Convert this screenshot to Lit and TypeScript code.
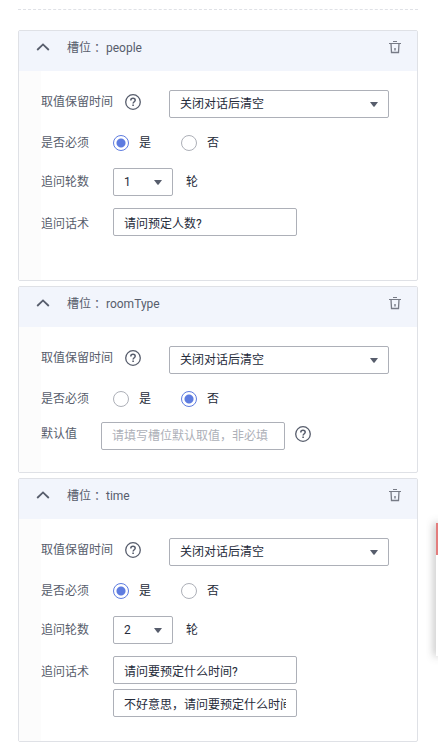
import { LitElement, html, css, svg, nothing } from "lit";
import { customElement, property } from "lit/decorators.js";

interface Slot {
  name: string;
  required: boolean;
  rounds?: string;
  prompts?: string[];
  space: "tall" | "short" | "normal";
}

const SLOTS: Slot[] = [
  { name: "people", required: true, rounds: "1", prompts: ["请问预定人数?"], space: "tall" },
  { name: "roomType", required: false, space: "short" },
  {
    name: "time",
    required: true,
    rounds: "2",
    prompts: ["请问要预定什么时间?", "不好意思，请问要预定什么时间?"],
    space: "normal",
  },
];

const chevron = svg`<svg width="14" height="8" viewBox="0 0 14 8" fill="none" stroke="#575d6c" stroke-width="1.8" aria-hidden="true"><path d="M1.2 7 7 1.4 12.8 7"/></svg>`;

const trash = svg`<svg width="12" height="13" viewBox="0 0 12 13" fill="none" stroke="#777b86" aria-hidden="true"><path d="M4 .5h4M0 2.5h12" stroke-width="1.2"/><path d="M2 2.5l.5 9h7l.5-9" stroke-width="1.3"/><path d="M6 7v2.5" stroke-width="1.4"/></svg>`;

const help = svg`<svg width="16" height="16" viewBox="0 0 16 16" fill="none" stroke="#575d6c" aria-hidden="true"><circle cx="8" cy="8" r="7.3" stroke-width="1.3"/><path d="M5.8 6.4C5.8 5 6.7 4.3 8 4.3s2.2.8 2.2 1.9c0 1.5-2.1 1.6-2.1 3.3" stroke-width="1.5"/><path d="M8.1 10.6v1.5" stroke-width="1.6"/></svg>`;

const caret = svg`<svg class="caret" width="8" height="5" viewBox="0 0 8 5" aria-hidden="true"><path d="M0 0h8L4.6 4.6Q4 5 3.4 4.6Z" fill="#575d6c"/></svg>`;

@customElement("slot-card")
export class SlotCard extends LitElement {
  @property({ attribute: false }) slotData!: Slot;

  static styles = css`
    :host { display: block; }
    * { box-sizing: border-box; }
    .card {
      border: 1px solid #dfe1e6;
      border-radius: 2px;
      background: #fff;
    }
    .head {
      display: flex;
      align-items: center;
      height: 40px;
      padding: 0 16px 8px 17px;
      background: #f2f5fc;
    }
    .title {
      flex: 1;
      margin: 0 0 0 17px;
      padding-top: 2px;
      font-size: 12px;
      line-height: 16px;
      font-weight: inherit;
      color: #575d6c;
      white-space: pre;
    }
    button {
      display: flex;
      padding: 0;
      border: 0;
      background: none;
      cursor: pointer;
    }
    .body {
      border-left: 22px solid #fcfcfc;
      padding-top: 19px;
    }
    .tall { padding-bottom: 40px; }
    .short { padding-bottom: 22px; }
    .normal { padding-bottom: 24px; }
    .row {
      display: flex;
      align-items: flex-start;
    }
    .label {
      flex: none;
      width: 72px;
      line-height: 24px;
      color: #575d6c;
    }
    .label.narrow { width: 60px; }
    .label.mid { line-height: 28px; }
    .label.low { line-height: 32px; }
    .help { margin: 4px 0 0 12px; }
    .help.after { margin-left: 10px; }
    .select {
      display: grid;
      align-items: center;
      width: 60px;
    }
    .select > * { grid-area: 1 / 1; }
    .select.wide {
      flex: 1;
      margin: 0 28px;
    }
    .caret {
      justify-self: end;
      margin-right: 11px;
      pointer-events: none;
    }
    select, .text {
      width: 100%;
      height: 28px;
      margin: 0;
      padding: 0 10px;
      border: 1px solid #adb0b8;
      border-radius: 2px;
      background: #fff;
      font: inherit;
      color: #252b3a;
      outline: 0;
    }
    select { appearance: none; }
    .text { width: 184px; }
    .text::placeholder { color: #adb0b8; opacity: 1; }
    .choices {
      display: flex;
      align-items: center;
      gap: 30px;
      height: 16px;
      margin: 17px 0;
    }
    .choices .label { margin-right: -30px; line-height: 16px; }
    .choice {
      display: flex;
      align-items: center;
      gap: 10px;
      line-height: 16px;
    }
    .radio {
      appearance: none;
      width: 16px;
      height: 16px;
      margin: 0;
      border: 1px solid #adb0b8;
      border-radius: 50%;
      background: #fff;
    }
    .radio:checked {
      border-color: #5e7ce0;
      background: radial-gradient(circle, #5e7ce0 4px, #fff 5px);
    }
    .unit { margin-left: 13px; line-height: 28px; }
    .prompts { margin-top: 12px; }
    .list {
      display: flex;
      flex-direction: column;
      gap: 5px;
    }
    .default { margin-top: -2px; }
  `;

  render() {
    const s = this.slotData;
    return html`
      <section class="card">
        <header class="head">
          <button aria-label="收起">${chevron}</button>
          <h2 class="title">槽位 ：${s.name}</h2>
          <button aria-label="删除">${trash}</button>
        </header>
        <div class="body ${s.space}">
          <div class="row">
            <label class="label" for="keep">取值保留时间</label>
            <button class="help" aria-label="帮助">${help}</button>
            <div class="select wide">
              <select id="keep"><option>关闭对话后清空</option></select>
              ${caret}
            </div>
          </div>
          <div class="choices" role="radiogroup" aria-labelledby="req">
            <span class="label" id="req">是否必须</span>
            <label class="choice"><input class="radio" type="radio" name="required" .checked=${s.required} />是</label>
            <label class="choice"><input class="radio" type="radio" name="required" .checked=${!s.required} />否</label>
          </div>
          ${s.prompts
            ? html`
                <div class="row">
                  <label class="label mid" for="rounds">追问轮数</label>
                  <div class="select">
                    <select id="rounds"><option>${s.rounds}</option></select>
                    ${caret}
                  </div>
                  <span class="unit">轮</span>
                </div>
                <div class="row prompts">
                  <label class="label low" for="prompt0">追问话术</label>
                  <div class="list">
                    ${s.prompts.map(
                      (p, i) => html`<input class="text" id="prompt${i}" type="text" aria-label=${i ? "追问话术" : nothing} .value=${p} />`
                    )}
                  </div>
                </div>
              `
            : html`
                <div class="row default">
                  <label class="label narrow" for="fallback">默认值</label>
                  <input class="text" id="fallback" type="text" placeholder="请填写槽位默认取值，非必填" />
                  <button class="help after" aria-label="帮助">${help}</button>
                </div>
              `}
        </div>
      </section>
    `;
  }
}

@customElement("app-root")
export class AppRoot extends LitElement {
  static styles = css`
    :host {
      display: block;
      position: relative;
      overflow: hidden;
      background: #fff;
      color: #252b3a;
      font: 12px/16px Roboto, "Noto Sans CJK SC", sans-serif;
    }
    .page {
      padding: 9px 20px 6px 18px;
    }
    .divider {
      margin: 0 0 20px;
      border: 0;
      border-top: 1px dashed #dfe1e6;
    }
    .cards {
      display: flex;
      flex-direction: column;
      gap: 5px;
    }
    .floating {
      position: absolute;
      top: 523px;
      right: 0;
      width: 2px;
      height: 133px;
      border-top: 32px solid #e37d7d;
      box-sizing: border-box;
      background: #fff;
      box-shadow: 0 0 8px rgba(0, 0, 0, 0.8);
    }
  `;

  render() {
    return html`
      <main class="page">
        <hr class="divider" />
        <div class="cards">
          ${SLOTS.map((s) => html`<slot-card .slotData=${s}></slot-card>`)}
        </div>
      </main>
      <aside class="floating"></aside>
    `;
  }
}
